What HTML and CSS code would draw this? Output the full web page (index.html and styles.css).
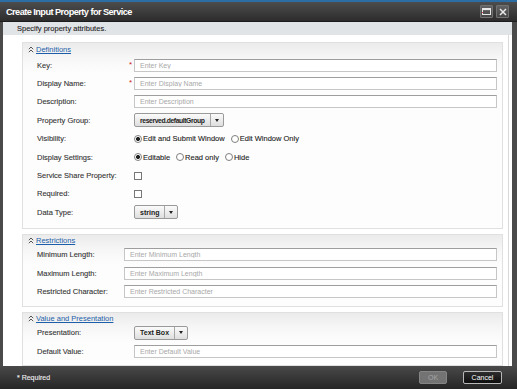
FILE: index.html
```html
<!DOCTYPE html>
<html lang="en">
<head>
<meta charset="utf-8">
<title>Create Input Property for Service</title>
<link rel="stylesheet" href="styles.css">
</head>
<body>
<div class="dialog">
  <header class="titlebar">
    <h1 class="title">Create Input Property for Service</h1>
    <div class="tb-btns">
      <span class="tb-btn"><svg width="9" height="7" viewBox="0 0 9 7"><rect x="0.5" y="0.5" width="8" height="6" fill="none" stroke="#e8e8e8"/><rect x="0.5" y="0.5" width="8" height="1.6" fill="#e8e8e8"/><rect x="0" y="4" width="1" height="1" fill="#d04040"/></svg></span>
      <span class="tb-btn"><svg width="8" height="8" viewBox="0 0 8 8"><path d="M1 1L7 7M7 1L1 7" stroke="#e8e8e8" stroke-width="1.5"/></svg></span>
    </div>
  </header>
  <div class="frame">
    <div class="subhead">Specify property attributes.</div>
    <main class="body">
      <div class="content">
        <section class="sec sec-first">
          <div class="sec-head"><svg class="chev" width="6" height="7" viewBox="0 0 6 7"><path d="M0.8 3.2L3 1L5.2 3.2M0.8 6.2L3 4L5.2 6.2" fill="none" stroke="#555" stroke-width="1"/></svg><a class="sec-link" href="#">Definitions</a></div>
          <div class="row"><span class="lbl">Key:</span><span class="req">*</span><input class="txt" placeholder="Enter Key"></div>
          <div class="row"><span class="lbl">Display Name:</span><span class="req">*</span><input class="txt" placeholder="Enter Display Name"></div>
          <div class="row"><span class="lbl">Description:</span><span></span><input class="txt" placeholder="Enter Description"></div>
          <div class="row"><span class="lbl">Property Group:</span><span></span><span class="select"><span class="val val-long">reserved.defaultGroup</span><span class="arr"></span></span></div>
          <div class="row"><span class="lbl">Visibility:</span><span></span>
            <span class="radios"><span class="radio"><span class="dot on"></span>Edit and Submit Window</span><span class="radio"><span class="dot"></span>Edit Window Only</span></span></div>
          <div class="row"><span class="lbl">Display Settings:</span><span></span>
            <span class="radios"><span class="radio"><span class="dot on"></span>Editable</span><span class="radio"><span class="dot"></span>Read only</span><span class="radio"><span class="dot"></span>Hide</span></span></div>
          <div class="row"><span class="lbl">Service Share Property:</span><span></span><span class="cb"></span></div>
          <div class="row"><span class="lbl">Required:</span><span></span><span class="cb"></span></div>
          <div class="row"><span class="lbl">Data Type:</span><span></span><span class="select"><span class="val">string</span><span class="arr"></span></span></div>
        </section>
        <section class="sec sec-narrow">
          <div class="sec-head"><svg class="chev" width="6" height="7" viewBox="0 0 6 7"><path d="M0.8 3.2L3 1L5.2 3.2M0.8 6.2L3 4L5.2 6.2" fill="none" stroke="#555" stroke-width="1"/></svg><a class="sec-link" href="#">Restrictions</a></div>
          <div class="row"><span class="lbl">Minimum Length:</span><span></span><input class="txt" placeholder="Enter Minimum Length"></div>
          <div class="row"><span class="lbl">Maximum Length:</span><span></span><input class="txt" placeholder="Enter Maximum Length"></div>
          <div class="row"><span class="lbl">Restricted Character:</span><span></span><input class="txt" placeholder="Enter Restricted Character"></div>
        </section>
        <section class="sec">
          <div class="sec-head"><svg class="chev" width="6" height="7" viewBox="0 0 6 7"><path d="M0.8 3.2L3 1L5.2 3.2M0.8 6.2L3 4L5.2 6.2" fill="none" stroke="#555" stroke-width="1"/></svg><a class="sec-link" href="#">Value and Presentation</a></div>
          <div class="row"><span class="lbl">Presentation:</span><span></span><span class="select"><span class="val">Text Box</span><span class="arr"></span></span></div>
          <div class="row"><span class="lbl">Default Value:</span><span></span><input class="txt" placeholder="Enter Default Value"></div>
        </section>
      </div>
    </main>
  </div>
  <footer class="footer">
    <span class="req-note">* Required</span>
    <div class="btns">
      <button class="btn btn-ok" disabled>OK</button>
      <button class="btn btn-cancel">Cancel</button>
    </div>
  </footer>
</div>
</body>
</html>
```

FILE: styles.css
```css
html, body {
  margin: 0;
  padding: 0;
}
body {
  width: 517px;
  height: 389px;
  overflow: hidden;
  font-family: "Liberation Sans", Arial, sans-serif;
  font-size: 7.5px;
  color: #333;
  background: #fff;
}
.dialog {
  display: flex;
  flex-direction: column;
  height: 389px;
}
.titlebar {
  height: 19px;
  border-top: 2px solid #2c6da6;
  border-bottom: 1px solid #1c1c1c;
  background: linear-gradient(#4d4d4d, #2c2c2c);
  display: flex;
  align-items: center;
  justify-content: space-between;
  padding: 0 8px 0 6px;
  flex: none;
}
.title {
  margin: 0;
  font-size: 9.2px;
  font-weight: bold;
  color: #fff;
  letter-spacing: -0.55px;
}
.tb-btns {
  display: flex;
  gap: 3px;
}
.tb-btn {
  width: 11px;
  height: 11px;
  border: 1px solid #727272;
  border-radius: 1px;
  background: linear-gradient(#626262, #474747);
  display: flex;
  align-items: center;
  justify-content: center;
}
.frame {
  flex: 1;
  display: flex;
  flex-direction: column;
  min-height: 0;
  border-left: 3px solid #4a4a4a;
  border-right: 5px solid #4a4a4a;
}
.subhead {
  height: 13px;
  line-height: 13px;
  padding-left: 14px;
  background: #e1e4e7;
  color: #222;
  font-size: 7.5px;
  -webkit-text-stroke: 0.1px #222;
  flex: none;
}
.body {
  flex: 1;
  min-height: 0;
  display: flex;
  overflow: hidden;
  background: #fff;
}
.content {
  flex: 1;
  display: flex;
  flex-direction: column;
  gap: 5px;
  padding: 7px 5px 0 19px;
  margin-right: 3px;
  border-right: 1px solid #d9d9d9;
}
.sec {
  border: 1px solid #e0e0e0;
  background: linear-gradient(#ebebeb, #f6f6f6 14px, #fdfdfd 30px);
  padding: 0 5px 5px 14px;
  flex: none;
}
.sec-first {
  padding-bottom: 6px;
}
.sec-head {
  height: 11px;
  display: flex;
  align-items: center;
  gap: 2px;
  margin-left: -9px;
}
.sec-first .sec-head {
  height: 13px;
}
.sec-link {
  color: #1d5ea8;
  text-decoration: underline;
  font-size: 7.5px;
}
.row {
  display: grid;
  grid-template-columns: 92px 5px 1fr;
  align-items: center;
  height: 18.4px;
}
.sec-narrow .row {
  grid-template-columns: 87px 0 1fr;
}
.lbl {
  color: #333;
  white-space: nowrap;
  -webkit-text-stroke: 0.1px #333;
}
.req {
  color: #d01c1c;
  font-size: 8px;
  align-self: start;
  margin-top: 4px;
}
.txt {
  box-sizing: border-box;
  width: 100%;
  height: 13px;
  margin: 0;
  padding: 0 0 0 5px;
  border: 1px solid #c6c6c6;
  border-top-color: #9e9e9e;
  background: #fff;
  font-family: "Liberation Sans", Arial, sans-serif;
  font-size: 7px;
  color: #333;
  outline: none;
}
.txt::placeholder {
  color: #a8a8a8;
}
.select {
  justify-self: start;
  display: inline-flex;
  align-items: stretch;
  height: 14px;
  box-sizing: border-box;
  border: 1px solid #9a9a9a;
  border-radius: 2px;
  background: linear-gradient(#fbfbfb, #dedede);
  font-weight: bold;
  font-size: 7px;
  color: #222;
}
.val {
  display: flex;
  align-items: center;
  padding: 0 5px 0 5px;
}
.val-long {
  letter-spacing: -0.4px;
  font-size: 6.8px;
}
.arr {
  width: 12px;
  border-left: 1px solid #a8a8a8;
  display: flex;
  align-items: center;
  justify-content: center;
}
.arr::after {
  content: "";
  border-left: 2.5px solid transparent;
  border-right: 2.5px solid transparent;
  border-top: 3px solid #222;
}
.radios {
  display: flex;
  align-items: center;
}
.radio {
  display: inline-flex;
  align-items: center;
  gap: 1px;
  margin-right: 6px;
  color: #222;
  white-space: nowrap;
  -webkit-text-stroke: 0.1px #222;
}
.dot {
  width: 6px;
  height: 6px;
  border: 1px solid #808080;
  border-radius: 50%;
  background: #fff;
}
.dot.on {
  background: radial-gradient(circle, #222 0 1.7px, #fff 2.3px);
}
.cb {
  width: 8px;
  height: 8px;
  box-sizing: border-box;
  border: 1px solid #777;
  background: #fff;
}
.footer {
  height: 23px;
  flex: none;
  display: flex;
  align-items: center;
  padding: 0 15px 0 17px;
  background: linear-gradient(#494949, #262626);
  color: #f2f2f2;
}
.req-note {
  font-size: 7px;
  -webkit-text-stroke: 0.1px #f2f2f2;
}
.btns {
  margin-left: auto;
  display: flex;
  gap: 16px;
}
.btn {
  height: 13px;
  box-sizing: border-box;
  border-radius: 2px;
  padding: 0;
  font-family: "Liberation Sans", Arial, sans-serif;
  font-size: 7px;
  display: flex;
  align-items: center;
  justify-content: center;
}
.btn-ok {
  width: 28px;
  background: #737373;
  border: 1px solid #858585;
  color: #a3a3a3;
}
.btn-cancel {
  width: 39px;
  background: linear-gradient(#2e2e2e, #0d0d0d);
  border: 1px solid #b8b8b8;
  color: #fff;
}
```
